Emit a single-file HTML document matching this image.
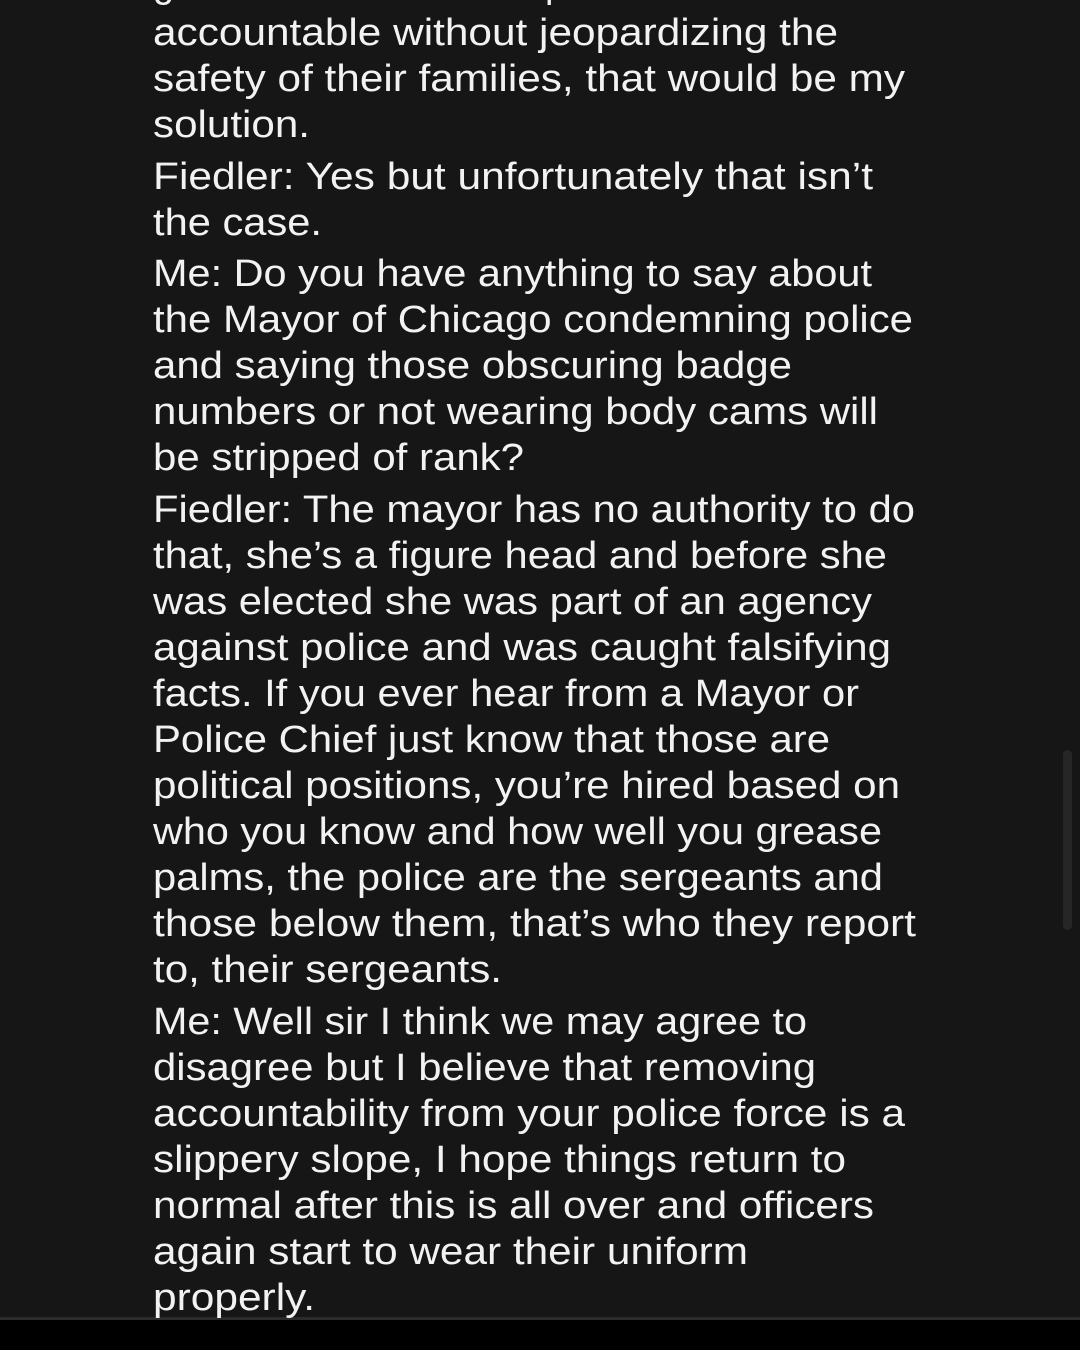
<!DOCTYPE html>
<html><head><meta charset="utf-8"><style>
html,body{margin:0;padding:0;background:#161616;width:1080px;height:1350px;overflow:hidden}
svg{display:block}
text{font-family:"Liberation Sans",sans-serif;font-size:38px;fill:#f2f2f2}
</style></head><body>
<svg width="1080" height="1350" viewBox="0 0 1080 1350">
<rect width="1080" height="1350" fill="#161616"/>
<rect x="1063" y="750" width="9" height="180" rx="4.5" fill="#262626"/>
<rect x="0" y="1317" width="1080" height="3" fill="#2b2b2b"/>
<rect x="0" y="1320" width="1080" height="30" fill="#000"/>
<text x="153" y="-3">g</text>
<text x="545" y="-3">p</text>
<text x="153" y="45" textLength="685" lengthAdjust="spacingAndGlyphs">accountable without jeopardizing the</text>
<text x="153" y="91" textLength="752" lengthAdjust="spacingAndGlyphs">safety of their families, that would be my</text>
<text x="153" y="137" textLength="157" lengthAdjust="spacingAndGlyphs">solution.</text>
<text x="153" y="189" textLength="720" lengthAdjust="spacingAndGlyphs">Fiedler: Yes but unfortunately that isn’t</text>
<text x="153" y="235" textLength="169" lengthAdjust="spacingAndGlyphs">the case.</text>
<text x="153" y="286" textLength="719" lengthAdjust="spacingAndGlyphs">Me: Do you have anything to say about</text>
<text x="153" y="332" textLength="760" lengthAdjust="spacingAndGlyphs">the Mayor of Chicago condemning police</text>
<text x="153" y="378" textLength="639" lengthAdjust="spacingAndGlyphs">and saying those obscuring badge</text>
<text x="153" y="424" textLength="725" lengthAdjust="spacingAndGlyphs">numbers or not wearing body cams will</text>
<text x="153" y="470" textLength="371" lengthAdjust="spacingAndGlyphs">be stripped of rank?</text>
<text x="153" y="522" textLength="762" lengthAdjust="spacingAndGlyphs">Fiedler: The mayor has no authority to do</text>
<text x="153" y="568" textLength="734" lengthAdjust="spacingAndGlyphs">that, she’s a figure head and before she</text>
<text x="153" y="614" textLength="719" lengthAdjust="spacingAndGlyphs">was elected she was part of an agency</text>
<text x="153" y="660" textLength="738" lengthAdjust="spacingAndGlyphs">against police and was caught falsifying</text>
<text x="153" y="706" textLength="706" lengthAdjust="spacingAndGlyphs">facts. If you ever hear from a Mayor or</text>
<text x="153" y="752" textLength="677" lengthAdjust="spacingAndGlyphs">Police Chief just know that those are</text>
<text x="153" y="798" textLength="747" lengthAdjust="spacingAndGlyphs">political positions, you’re hired based on</text>
<text x="153" y="844" textLength="729" lengthAdjust="spacingAndGlyphs">who you know and how well you grease</text>
<text x="153" y="890" textLength="730" lengthAdjust="spacingAndGlyphs">palms, the police are the sergeants and</text>
<text x="153" y="936" textLength="763" lengthAdjust="spacingAndGlyphs">those below them, that’s who they report</text>
<text x="153" y="982" textLength="349" lengthAdjust="spacingAndGlyphs">to, their sergeants.</text>
<text x="153" y="1034" textLength="654" lengthAdjust="spacingAndGlyphs">Me: Well sir I think we may agree to</text>
<text x="153" y="1080" textLength="663" lengthAdjust="spacingAndGlyphs">disagree but I believe that removing</text>
<text x="153" y="1126" textLength="752" lengthAdjust="spacingAndGlyphs">accountability from your police force is a</text>
<text x="153" y="1172" textLength="693" lengthAdjust="spacingAndGlyphs">slippery slope, I hope things return to</text>
<text x="153" y="1218" textLength="721" lengthAdjust="spacingAndGlyphs">normal after this is all over and officers</text>
<text x="153" y="1264" textLength="595" lengthAdjust="spacingAndGlyphs">again start to wear their uniform</text>
<text x="153" y="1310" textLength="162" lengthAdjust="spacingAndGlyphs">properly.</text>
</svg>
</body></html>
